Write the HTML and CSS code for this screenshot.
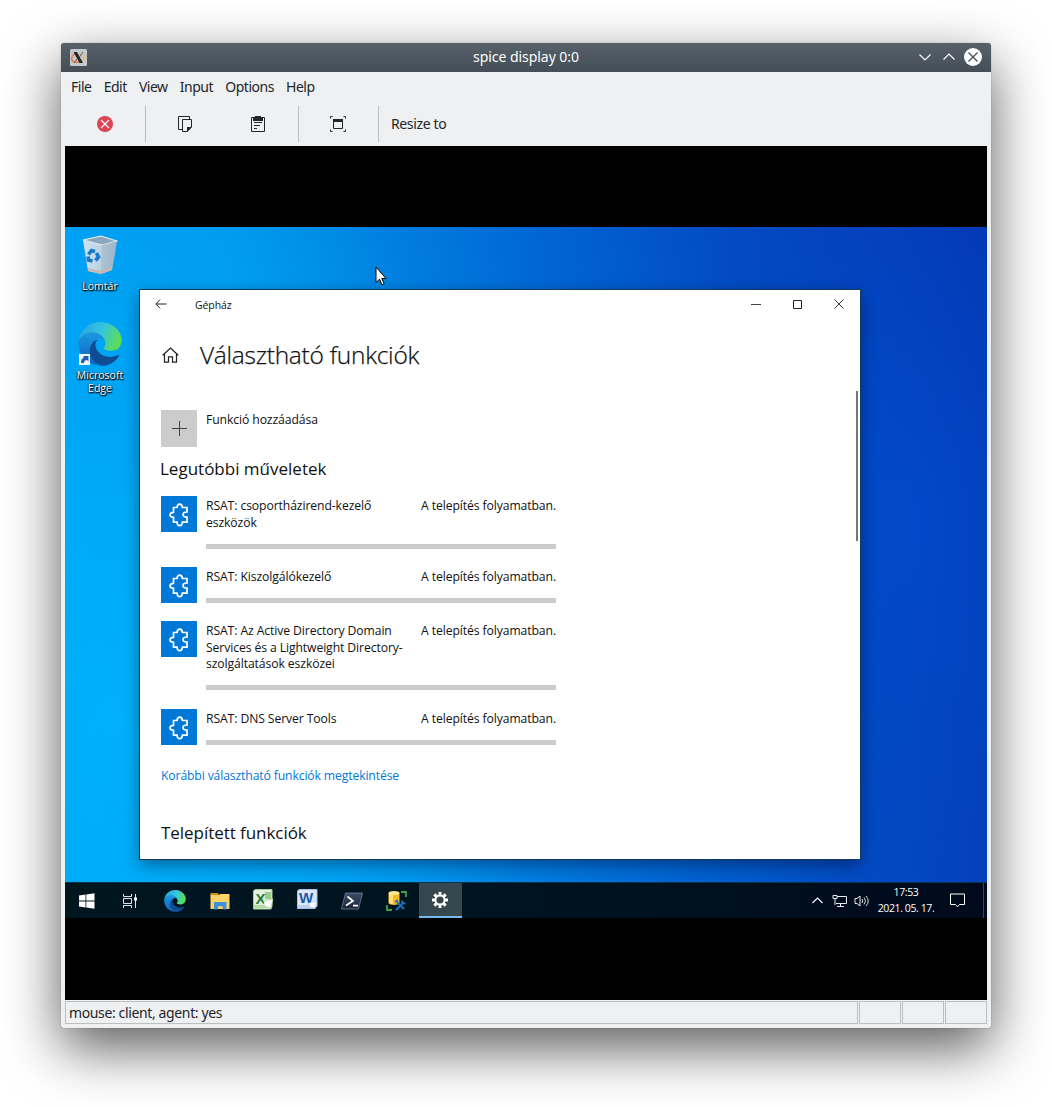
FILE: index.html
```html
<!DOCTYPE html>
<html lang="hu">
<head>
<meta charset="utf-8">
<title>spice display 0:0</title>
<link rel="stylesheet" href="styles.css">
</head>
<body>
<svg class="defs" width="0" height="0">
  <defs>
    <linearGradient id="edgeTop" x1="0" y1="0.3" x2="1" y2="0.6"><stop offset="0" stop-color="#2aa6e0"/><stop offset=".5" stop-color="#35c5dc"/><stop offset="1" stop-color="#5ee04a"/></linearGradient>
    <linearGradient id="edgeBody" x1="0" y1="0" x2="0" y2="1"><stop offset="0" stop-color="#1b9de2"/><stop offset="1" stop-color="#0f62c0"/></linearGradient>
    <linearGradient id="binSide" x1="0" y1="0" x2="1" y2="0"><stop offset="0" stop-color="#cfe2f0"/><stop offset=".55" stop-color="#b9d0e2"/><stop offset="1" stop-color="#92a8ba"/></linearGradient>
    <linearGradient id="psBg" x1="0" y1="0" x2="0" y2="1"><stop offset="0" stop-color="#3d4d66"/><stop offset="1" stop-color="#1a2438"/></linearGradient>
    <symbol id="edge" viewBox="0 0 256 260">
      <path d="M235.680 195.460a93.730 93.730 0 0 1-10.540 4.710 101.870 101.870 0 0 1-35.900 6.460c-47.320 0-88.540-32.550-88.540-74.320A31.480 31.480 0 0 1 117.130 105c-42.800 1.800-53.800 46.400-53.800 72.530 0 73.880 68.090 81.370 82.760 81.370 7.910 0 19.840-2.300 27-4.560l1.310-.44A128.340 128.340 0 0 0 241 201.100a4 4 0 0 0-5.320-5.640z" fill="#0f4c93"/>
      <path d="M105.730 241.420A79.200 79.200 0 0 1 83 220.080a80.720 80.720 0 0 1 29.490-120.200c3.120-1.470 8.450-4.130 15.540-4a32.350 32.350 0 0 1 25.690 13 31.880 31.880 0 0 1 6.360 18.660c0-.21 24.460-79.600-80-79.600-43.900 0-80 41.660-80 78.210a130.150 130.150 0 0 0 12.110 56 128 128 0 0 0 156.380 67.110 75.550 75.550 0 0 1-62.780-8z" fill="url(#edgeBody)"/>
      <path d="M152.330 148.860c-.81 1.050-3.300 2.500-3.300 5.660 0 2.610 1.700 5.120 4.720 7.230 14.380 10 41.490 8.680 41.560 8.680a59.560 59.560 0 0 0 30.270-8.350A61.380 61.380 0 0 0 256 109.210c.26-22.410-8-37.310-11.340-43.910C223.460 23.840 177.720 0 128 0A128 128 0 0 0 0 126.200c.48-36.540 36.800-66.050 80-66.050 3.500 0 23.460.34 42 10.070 16.340 8.580 24.900 18.940 30.850 29.210 6.180 10.670 7.280 24.150 7.280 29.520s-2.740 13.330-7.800 19.910z" fill="url(#edgeTop)"/>
    </symbol>
    <symbol id="puzzle" viewBox="0 0 36 36">
      <path d="M13 11.500h3c.2-2.300 1-3.300 2.700-3.300s2.500 1 2.700 3.300h4.600v4.500c-2.700 0-4 1-4 2.600s1.300 2.600 4 2.600v5h-4.600c-.2 2.300-1 3.400-2.700 3.400s-2.500-1.100-2.700-3.400h-3.500v-4.900c-2.400-.1-3.500-.9-3.500-2.500s1.100-2.300 3.500-2.500v-4.800z" fill="none" stroke="#fff" stroke-width="1.700"/>
    </symbol>
  </defs>
</svg>

<div class="window">
  <header class="titlebar">
    <svg class="app-icon" width="17" height="17" viewBox="0 0 17 17"><rect width="17" height="17" rx="1.500" fill="#c3c8cc"/><path d="M6 4.500C1.500 6 .5 10 3 12.500c3 1.500 7 .5 9-1.500" fill="none" stroke="#f0702c" stroke-width="1.300"/><path d="M12 4.500c3.500 2 3 5.500 0 7.500" fill="none" stroke="#f5b84f" stroke-width="1.200"/><path d="M3.500 3H7l6 11H9.500z" fill="#26292c"/><path d="M13 3 9.500 8M7 10 4 14" stroke="#55595d" stroke-width="1"/></svg>
    <span class="title">spice display 0:0</span>
    <svg class="win-buttons" width="68" height="20" viewBox="0 0 68 20"><path d="M4.500 7.500l5.500 5.500 5.500-5.500M28.500 12.500 34 7l5.500 5.500" fill="none" stroke="#fcfcfc" stroke-width="1.200"/><circle cx="58" cy="10" r="9" fill="#fcfcfc"/><path d="M53.500 5.500l9 9m0-9-9 9" stroke="#485056" stroke-width="1.300"/></svg>
  </header>
  <nav class="menubar"><span>File</span><span>Edit</span><span>View</span><span>Input</span><span>Options</span><span>Help</span></nav>
  <div class="toolbar">
    <div class="tool tool-first"><svg width="16" height="16" viewBox="0 0 16 16"><circle cx="8" cy="8" r="8" fill="#da4453"/><path d="M4 4l8 8m0-8-8 8" stroke="#fff" stroke-width="1.100"/></svg></div>
    <div class="tool tool-copy"><svg width="16" height="16" viewBox="0 0 16 16"><path d="M5 13.500H1.500v-13h11V3" fill="none" stroke="#232629"/><path d="M5.500 3.500h9V11l-4 4.500h-5z" fill="none" stroke="#232629"/><path d="M10 15.500V11h5z" fill="#232629"/></svg></div>
    <div class="tool tool-paste"><svg width="16" height="16" viewBox="0 0 16 16"><path d="M1.500 1.500h13v14h-13z" fill="none" stroke="#232629"/><path d="M3 1h2V0h6v1h2v4H3z" fill="#232629"/><path d="M4 6.500h8M4 9.500h6M4 12.500h3" stroke="#232629"/></svg></div>
    <div class="tool tool-full"><svg width="16" height="16" viewBox="0 0 16 16"><path d="M3.500 4v8.500h9V4" fill="none" stroke="#232629"/><path d="M3 3h10v3H3z" fill="#232629"/><path d="M.5 2.500V.5h2M13.500 .5h2v2M15.500 13.500v2h-2M2.500 15.500h-2v-2" fill="none" stroke="#232629"/></svg></div>
    <span class="resize">Resize to</span>
  </div>

  <main class="display">
    <div class="desktop">
      <div class="shortcut bin">
        <svg width="36" height="40" viewBox="0 0 36 40"><path d="M1 5 19 1l16 5-5 29-11 4-13-3z" fill="url(#binSide)"/><path d="M1 5 19 1l16 5-15 4z" fill="#8ba7bd" stroke="#e7edf2" stroke-width="1.200"/><path d="M20 10l15-4-5 29-11 4z" fill="#a5bccd" opacity=".7"/><path d="M6 33l13 3 11-4-1 3-10 4-13-3z" fill="#c9b9ae"/><g fill="none" stroke="#1679cc" stroke-width="3.600"><path d="M6.500 19.500l3-4 3.500 1"/><path d="M14.500 18l2 4-3 3.500"/><path d="M10.500 26l-4-1-.5-3.500"/></g></svg>
        <span>Lomtár</span>
      </div>
      <div class="shortcut edge">
        <svg width="44" height="44" viewBox="0 0 44 44"><use href="#edge" width="44" height="44"/><path d="M1 32h11v11H1z" fill="#f4f6f8"/><path d="M3 41c0-3 1-5 3-5.500L5 34h5.500v5.500L9 38c-2 0-3 1-3 3z" fill="#1c5cae"/></svg>
        <span>Microsoft<br>Edge</span>
      </div>

      <section class="settings">
        <div class="caption">
          <svg class="back" width="12" height="10" viewBox="0 0 12 10"><path d="M11.500 5H1M5 .7 .8 5 5 9.300" fill="none" stroke="#222"/></svg>
          <span>Gépház</span>
          <svg class="caption-buttons" width="94" height="12" viewBox="0 0 94 12"><path d="M1 6.500h10" stroke="#444"/><path d="M43.500 2.500h8v8h-8z" fill="none" stroke="#222"/><path d="M84.500 1.500l9 9m0-9-9 9" stroke="#333"/></svg>
        </div>
        <div class="heading">
          <svg width="17" height="16" viewBox="0 0 17 16"><path d="M.7 8.300 8.500 1l7.800 7.300M2.500 7v8.200h4V9.800h4v5.400h4V7" fill="none" stroke="#222" stroke-width="1.200"/></svg>
          <h1>Választható funkciók</h1>
        </div>
        <div class="add">
          <div class="plus"><svg width="16" height="16" viewBox="0 0 16 16"><path d="M8.500 1v15M1 8.500h15" stroke="#444"/></svg></div>
          <span>Funkció hozzáadása</span>
        </div>
        <h2 class="recent">Legutóbbi műveletek</h2>
        <ul class="features">
          <li><svg class="tile" viewBox="0 0 36 36"><use href="#puzzle"/></svg><div class="info"><div class="line"><p>RSAT: csoportházirend-kezelő<br>eszközök</p><em>A telepítés folyamatban.</em></div><div class="bar"></div></div></li>
          <li><svg class="tile" viewBox="0 0 36 36"><use href="#puzzle"/></svg><div class="info"><div class="line"><p>RSAT: Kiszolgálókezelő</p><em>A telepítés folyamatban.</em></div><div class="bar"></div></div></li>
          <li><svg class="tile" viewBox="0 0 36 36"><use href="#puzzle"/></svg><div class="info"><div class="line"><p>RSAT: Az Active Directory Domain<br>Services és a Lightweight Directory-<br>szolgáltatások eszközei</p><em>A telepítés folyamatban.</em></div><div class="bar"></div></div></li>
          <li><svg class="tile" viewBox="0 0 36 36"><use href="#puzzle"/></svg><div class="info"><div class="line"><p>RSAT: DNS Server Tools</p><em>A telepítés folyamatban.</em></div><div class="bar"></div></div></li>
        </ul>
        <a class="history">Korábbi választható funkciók megtekintése</a>
        <h2 class="installed">Telepített funkciók</h2>
        <div class="scrollbar"></div>
      </section>

      <svg class="pointer" width="12" height="20" viewBox="0 0 12 20"><path d="M1 1v15.500l3.500-3.300 2.400 5.500 2.300-1-2.400-5.200H11z" fill="#fff" stroke="#000"/></svg>
    </div>

    <footer class="taskbar">
      <div class="task"><svg width="16" height="16" viewBox="0 0 16 16"><path d="M0 2.500 6.500 1.600v6H0zM7.300 1.500 15.500.3v7.300H7.300zM0 8.400h6.500v6L0 13.500zM7.300 8.400h8.200v7.300l-8.200-1.200z" fill="#fff"/></svg></div>
      <div class="task view"><svg width="16" height="16" viewBox="0 0 16 16"><path d="M1.500 1v2.500h8V1M1.500 15v-2.500h8V15M1.500 5.500h8v5h-8z" fill="none" stroke="#dfe5e8"/><path d="M13.500 1v14" stroke="#dfe5e8"/><path d="M12 4.500h3v3h-3z" fill="#fff"/></svg></div>
      <div class="task"><svg width="22" height="22"><use href="#edge" width="22" height="22"/></svg></div>
      <div class="task"><svg width="20" height="18" viewBox="0 0 20 18"><path d="M.5 1h8v3h-8z" fill="#d98c13"/><path d="M.5 3H9l1-1h9.500v15H.5z" fill="#fcd367"/><path d="M4 17.500V10h12.500v7.500h-3.800v-3.300H8v3.300z" fill="#3f92d8"/></svg></div>
      <div class="task office"><svg width="21" height="21" viewBox="0 0 21 21"><path d="M2 .5h17v17l-1 2.500H.5V2z" fill="#e3f1dc" stroke="#a5cf94"/><path d="M12 3h6v7h-6z" fill="#9ccc8c"/><path d="M1 16h12v3H1z" fill="#b5dba5"/><text x="2.500" y="14.500" class="glyph excel">X</text><path d="M11 12l9-2-2 9-7-2z" fill="#fafdf8" stroke="#a7c99b" stroke-width=".7"/></svg></div>
      <div class="task office"><svg width="21" height="21" viewBox="0 0 21 21"><path d="M2 .5h18V17l-2 2.500H.5V2z" fill="#dce8f8" stroke="#a6c2e6"/><path d="M1 16h12v3H1z" fill="#b9d0ee"/><text x="2" y="14" class="glyph word">W</text><path d="M12 14l8-2-2 7-6-1z" fill="#fafcff" stroke="#a9bfdd" stroke-width=".7"/></svg></div>
      <div class="task"><svg width="22" height="18" viewBox="0 0 22 18"><path d="M4.500 1h17l-4 16H.5z" fill="url(#psBg)" stroke="#70809a" stroke-width=".8"/><path d="M6.500 4.500 12 9l-7 4.500M12 13.700h5" fill="none" stroke="#fff" stroke-width="1.700"/></svg></div>
      <div class="task"><svg width="21" height="21" viewBox="0 0 21 21"><path d="M2.500 3v10c1 2.500 10 2.500 11 0V3z" fill="#f5b92c"/><path d="M3 3h4v11c-2 0-4-.5-4-1z" fill="#ffe06f"/><ellipse cx="8" cy="3" rx="5.500" ry="2" fill="#ffe892"/><path d="M15 2h5v5M1 15v5h5" fill="none" stroke="#3ca24a" stroke-width="1.800"/><path d="M11 12l7 7M18 12l-8 8" stroke="#1470bd" stroke-width="2"/><path d="M9 12l3-2M16 10.500v3h3.500" fill="none" stroke="#1470bd" stroke-width="1.600"/></svg></div>
      <div class="task active"><svg width="18" height="18" viewBox="-9 -9 18 18"><path d="M-1.500-8h3V8h-3z" fill="#fff"/><path d="M-1.500-8h3V8h-3z" fill="#fff" transform="rotate(45)"/><path d="M-1.500-8h3V8h-3z" fill="#fff" transform="rotate(90)"/><path d="M-1.500-8h3V8h-3z" fill="#fff" transform="rotate(135)"/><circle r="4.600" fill="#37474f" stroke="#fff" stroke-width="2"/></svg></div>
      <div class="tray">
        <svg class="chevron" width="11" height="7" viewBox="0 0 11 7"><path d="M.5 6l5-5 5 5" fill="none" stroke="#fff" stroke-width="1.100"/></svg>
        <svg class="net" width="16" height="14" viewBox="0 0 16 14"><path d="M5 2.500h9.500v7H4M5 12.500h7M8.500 10v2.500" fill="none" stroke="#e8ecf0"/><path d="M1 1.500h4v3H1zM3 5v6" fill="none" stroke="#e8ecf0"/></svg>
        <svg class="sound" width="16" height="14" viewBox="0 0 16 14"><path d="M1 4.500h2L6 2v10L3 9.500H1z" fill="none" stroke="#e8ecf0"/><path d="M8 5q1.500 2 0 4M10 3.500q3 3.500 0 7M12 2q4.500 5 0 10" fill="none" stroke="#d3d9df"/></svg>
        <div class="clock">17:53<br>2021. 05. 17.</div>
        <svg class="notes" width="15" height="15" viewBox="0 0 15 15"><path d="M.5 1h14v10.500h-5l-2 2.300-2-2.300h-5z" fill="none" stroke="#fff"/></svg>
      </div>
      <div class="peek"></div>
    </footer>
  </main>
  <div class="statusbar"><div class="status-text">mouse: client, agent: yes</div><div></div><div></div><div></div></div>
</div>
</body>
</html>
```
FILE: styles.css
```css
* { box-sizing: border-box; }
body { margin: 0; width: 1052px; height: 1107px; padding: 43px 61px 0; background: #fff; overflow: hidden; font: 14px/20px "Noto Sans", sans-serif; color: #232629; }
svg { display: block; flex: none; }
.defs { position: absolute; }
h1, h2, p, ul { margin: 0; padding: 0; }
.window { width: 930px; height: 985px; background: #eff0f1; border-radius: 3px; box-shadow: 0 0 1px rgba(0,0,0,.5), 0 20px 55px rgba(0,0,0,.65); display: flex; flex-direction: column; letter-spacing: -.37px; }
.titlebar { height: 29px; display: flex; align-items: center; padding: 0 8px 1px 9px; border-radius: 3px 3px 0 0; background: linear-gradient(#566169, #444e56); color: #fcfcfc; letter-spacing: 0; }
.app-icon { margin-right: 50px; }
.title { flex: 1; text-align: center; letter-spacing: -.05px; }
.menubar { height: 30px; padding-left: 10px; display: flex; align-items: center; gap: 12.200px; letter-spacing: -.49px; }
.toolbar { height: 44px; padding: 4px 0; display: flex; align-items: stretch; }
.tool { display: flex; align-items: center; justify-content: center; }
.tool-first { width: 85px; border-right: 1px solid #bcbebf; padding-left: 4px; }
.tool-copy { width: 79px; padding-right: 2px; }
.tool-paste { width: 74px; border-right: 1px solid #bcbebf; padding-right: 7px; }
.tool-full { width: 80px; border-right: 1px solid #bcbebf; padding-right: 2px; }
.resize { align-self: center; padding-left: 12px; }

.display { margin: 0 4px; height: 854px; padding: 81px 0 82px; background: #000; font-family: "Open Sans", "Noto Sans", sans-serif; letter-spacing: 0; }
.desktop { position: relative; height: 655px; background: radial-gradient(ellipse 420px 640px at 5% 75%, rgba(0,190,255,.6), rgba(0,170,250,0)), radial-gradient(ellipse 200px 380px at 92% 45%, rgba(0,80,215,.5), rgba(0,80,215,0)), linear-gradient(79deg, #009ef2 0%, #0098ee 27%, #0088e4 38%, #0066d3 57%, #034bc2 75%, #0437b2 100%); }
.shortcut { position: absolute; left: 0; width: 70px; display: flex; flex-direction: column; align-items: center; text-align: center; color: #fff; font-size: 10.500px; line-height: 13px; text-shadow: 0 1px 2px #000, 1px 1px 1px #000, 0 0 2px rgba(0,0,0,.6); }
.bin { top: 8px; gap: 5px; }
.edge { top: 95px; gap: 3px; }
.pointer { position: absolute; left: 310px; top: 39px; }

.settings { position: absolute; left: 75px; top: 63px; width: 720px; height: 569px; background: #fff; color: #111; box-shadow: 0 0 0 1px #123a5c, 0 5px 15px rgba(0,0,30,.45); font-size: 12.200px; letter-spacing: -.1px; line-height: 16.500px; white-space: nowrap; }
.caption { height: 30px; display: flex; align-items: center; padding: 0 16px 2px 15px; font-size: 10.500px; }
.caption span { padding-top: 2px; }
.back { margin-right: 28px; }
.caption-buttons { margin-left: auto; }
.heading { margin-top: 18px; height: 34px; display: flex; align-items: center; padding-left: 22px; gap: 21px; }
h1 { font-size: 24.500px; font-weight: 300; line-height: 34px; letter-spacing: -.27px; -webkit-text-stroke: .25px #111; }
.add { margin: 38px 0 0 21px; display: flex; gap: 9px; }
.plus { width: 36px; height: 37px; padding-bottom: 1px; background: #ccc; display: flex; align-items: center; justify-content: center; }
.add span { padding-top: 2px; }
h2 { font-size: 17px; font-weight: 400; line-height: 24px; letter-spacing: 0; }
.recent { margin: 10px 0 15px 20px; }
.features { list-style: none; margin-left: 21px; width: 395px; display: flex; flex-direction: column; gap: 18.300px; }
.features li { display: flex; gap: 9px; }
.tile { width: 36px; height: 36px; background: #0078d7; }
.info { flex: 1; padding-top: 2px; }
.line { display: flex; justify-content: space-between; margin-bottom: 12.600px; }
.line em { font-style: normal; }
.bar { height: 5px; background: #ccc; }
.history { display: block; margin: 23.500px 0 0 21px; color: #0078d7; letter-spacing: -.13px; }
.installed { margin: 36px 0 0 21px; letter-spacing: -.05px; }
.scrollbar { position: absolute; right: 2px; top: 101px; width: 2px; height: 150px; background: #777; }

.taskbar { height: 36px; display: flex; background: linear-gradient(90deg, #00161f, #001320 50%, #000a1c); border-top: 1px solid #06344d; }
.task { width: 44.200px; display: flex; align-items: center; justify-content: center; }
.view { padding-right: 2px; }
.office { padding: 0 1px 2px 0; }
.active { background: #37474f; border-bottom: 2px solid #76b9ed; width: 43px; }
.glyph { font: bold 15px "Liberation Sans", sans-serif; letter-spacing: 0; }
.excel { fill: #267a37; }
.word { fill: #1d57a8; }
.tray { margin-left: auto; display: flex; align-items: center; color: #fff; }
.net { margin-left: 9px; }
.sound { margin-left: 6px; }
.clock { width: 60px; margin: -1px 0 0 6px; font-size: 10.500px; letter-spacing: -.4px; line-height: 16px; text-align: center; white-space: nowrap; }
.notes { margin: 0 18px 0 14px; }
.peek { width: 4px; border-left: 1px solid #3b4654; }
.statusbar { margin: 1px 4px 0; height: 23px; display: flex; gap: 1px; }
.statusbar div { width: 42px; border: 1px solid #bcbec0; }
.statusbar .status-text { flex: 1; padding-left: 3px; line-height: 21px; }
```
